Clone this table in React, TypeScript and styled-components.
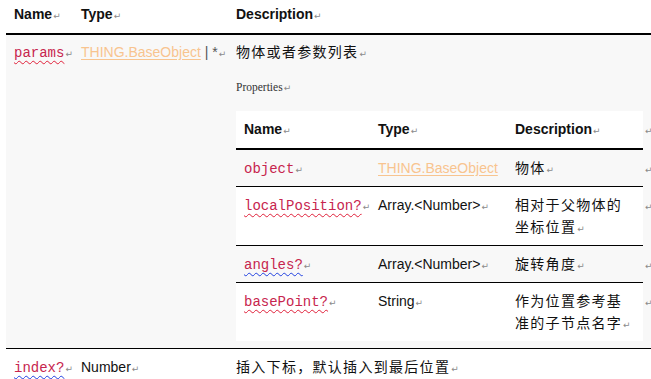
import React from "react";
import styled, { createGlobalStyle } from "styled-components";

const Global = createGlobalStyle`
  html, body { margin: 0; padding: 0; background: #fff; }
  body { font-family: "Liberation Sans", "Noto Sans CJK SC", sans-serif; color: #111; }
`;

const Page = styled.div`
  padding-left: 6px;
  width: 645px;
`;

const OuterRow = styled.div<{ $bg?: string; $border?: string }>`
  display: grid;
  grid-template-columns: 67px 155px 1fr;
  background: ${(p) => p.$bg || "#fff"};
  border-bottom: ${(p) => p.$border || "none"};
`;

const HeadCell = styled.div`
  padding: 4px 0 9px 8px;
  line-height: 20px;
  font-size: 14px;
  font-weight: 700;
  color: #111;
  white-space: nowrap;
`;

const Cell = styled.div<{ $pt?: number; $pb?: number }>`
  padding: ${(p) => p.$pt ?? 7}px 0 ${(p) => p.$pb ?? 7}px 8px;
  line-height: 22px;
  font-size: 14px;
  white-space: nowrap;
`;

const Code = styled.span<{ $wave?: string }>`
  font-family: "Liberation Mono", "DejaVu Sans Mono", monospace;
  font-size: 14px;
  line-height: 0;
  color: #c7254e;
  text-decoration: ${(p) => (p.$wave ? `underline wavy ${p.$wave}` : "none")};
  text-decoration-thickness: 1px;
  text-underline-offset: 3px;
`;

const Link = styled.span`
  color: #f8c48f;
  text-decoration: underline;
  text-decoration-color: #f8c48f;
  text-underline-offset: 2px;
`;

const Muted = styled.span`
  color: #555;
`;

const Cjk = styled.span`
  font-family: "Liberation Sans", "Noto Sans CJK SC", sans-serif;
  font-size: 14px;
  letter-spacing: 1.3px;
  color: #111;
`;

const CjkBlock = styled.div`
  font-family: "Liberation Sans", "Noto Sans CJK SC", sans-serif;
  font-size: 14px;
  letter-spacing: 1.3px;
  color: #111;
  white-space: normal;
  line-height: 22px;
`;

const Mark = styled.span`
  font-family: "DejaVu Sans", sans-serif;
  font-size: 9px;
  line-height: 0;
  font-weight: 400;
  letter-spacing: 0;
  color: #8a8a8a;
  margin-left: 1px;
`;

const Caption = styled.div`
  margin-top: 16px;
  font-family: "Liberation Serif", serif;
  font-size: 11.5px;
  line-height: 16px;
  color: #333;
`;

const Inner = styled.div`
  margin-top: 16px;
`;

const InnerRow = styled.div`
  display: grid;
  grid-template-columns: 407px 1fr;
`;

const InnerBody = styled.div<{ $bg: string; $border: string }>`
  display: grid;
  grid-template-columns: 134px 137px 136px;
  background: ${(p) => p.$bg};
  border-bottom: ${(p) => p.$border};
`;

const InnerHead = styled.div`
  padding: 7px 8px 8px;
  line-height: 22px;
  font-size: 14px;
  font-weight: 700;
  white-space: nowrap;
`;

const InnerCell = styled.div`
  padding: 7px 8px;
  line-height: 22px;
  font-size: 14px;
  white-space: nowrap;
  overflow: hidden;
`;

const RowMark = styled.div`
  padding: 7px 0 0 1px;
  line-height: 22px;
`;

const M = () => <Mark>↵</Mark>;

type Prop = {
  name: string;
  wave?: string;
  type: React.ReactNode;
  desc: string;
  bg: string;
  border: string;
};

const props: Prop[] = [
  { name: "object", type: <Link>THING.BaseObject</Link>, desc: "物体", bg: "#f8f8f8", border: "1px solid #000" },
  { name: "localPosition?", wave: "#e0203a", type: <>Array.&lt;Number&gt;<M /></>, desc: "相对于父物体的坐标位置", bg: "#fff", border: "1px solid #000" },
  { name: "angles?", wave: "#2040e0", type: <>Array.&lt;Number&gt;<M /></>, desc: "旋转角度", bg: "#f8f8f8", border: "1px solid #000" },
  { name: "basePoint?", wave: "#e0203a", type: <>String<M /></>, desc: "作为位置参考基准的子节点名字", bg: "#fff", border: "none" },
];

export default function App() {
  return (
    <>
      <Global />
      <Page>
        <OuterRow $border="2px solid #000">
          <HeadCell>Name<M /></HeadCell>
          <HeadCell>Type<M /></HeadCell>
          <HeadCell>Description<M /></HeadCell>
        </OuterRow>

        <OuterRow $bg="#f8f8f8" $border="1px solid #000">
          <Cell $pt={6}>
            <Code $wave="#e0203a">params</Code><M />
          </Cell>
          <Cell $pt={6}>
            <Link>THING.BaseObject</Link> <Muted>| *</Muted><M />
          </Cell>
          <Cell $pt={6} $pb={7}>
            <Cjk>物体或者参数列表</Cjk><M />
            <Caption>Properties<M /></Caption>
            <Inner>
              <InnerRow>
                <InnerBody $bg="#fff" $border="2px solid #000">
                  <InnerHead>Name<M /></InnerHead>
                  <InnerHead>Type<M /></InnerHead>
                  <InnerHead>Description<M /></InnerHead>
                </InnerBody>
                <RowMark><M /></RowMark>
              </InnerRow>
              {props.map((p) => (
                <InnerRow key={p.name}>
                  <InnerBody $bg={p.bg} $border={p.border}>
                    <InnerCell>
                      <Code $wave={p.wave}>{p.name}</Code><M />
                    </InnerCell>
                    <InnerCell>{p.type}</InnerCell>
                    <InnerCell>
                      <CjkBlock>{p.desc}<M /></CjkBlock>
                    </InnerCell>
                  </InnerBody>
                  <RowMark><M /></RowMark>
                </InnerRow>
              ))}
            </Inner>
          </Cell>
        </OuterRow>

        <OuterRow>
          <Cell>
            <Code $wave="#2040e0">index?</Code><M />
          </Cell>
          <Cell>Number<M /></Cell>
          <Cell>
            <Cjk>插入下标，默认插入到最后位置</Cjk><M />
          </Cell>
        </OuterRow>
      </Page>
    </>
  );
}
